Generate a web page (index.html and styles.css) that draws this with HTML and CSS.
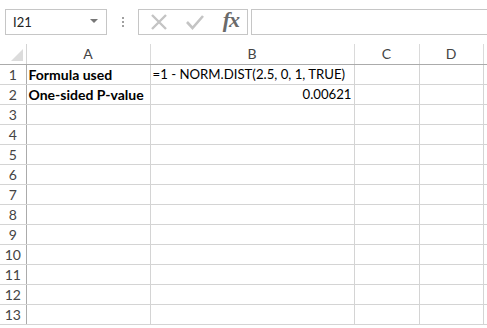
FILE: index.html
```html
<!DOCTYPE html>
<html lang="en">
<head>
  <meta charset="UTF-8" />
  <title>Sheet1</title>
  <link rel="stylesheet" href="styles.css">
</head>
<body>
  <div class="toolbar">
    <div class="namebox">
      <span class="cellref">I21</span>
      <span class="caret"></span>
    </div>
    <div class="grip"><i></i><i></i><i></i></div>
    <div class="fbuttons">
      <svg class="ico" width="18" height="18" viewBox="0 0 18 18"><path d="M2 2 L16 16 M16 2 L2 16" stroke="#c4c4c4" stroke-width="2.4" fill="none"/></svg>
      <svg class="ico" width="18" height="18" viewBox="0 0 18 18"><path d="M1 9 L6.5 15 L17 3" stroke="#c4c4c4" stroke-width="2.6" fill="none"/></svg>
      <span class="fx">fx</span>
    </div>
    <div class="fbar"></div>
  </div>

  <table class="sheet">
    <colgroup>
      <col class="c-hd"><col class="c-a"><col class="c-b"><col class="c-c"><col class="c-d"><col class="c-e">
    </colgroup>
    <tr class="colhead">
      <th class="corner"><span class="tri"></span></th><th>A</th><th>B</th><th>C</th><th>D</th><th class="last"></th>
    </tr>
    <tr><th>1</th><td class="bold">Formula used</td><td>=1 - NORM.DIST(2.5, 0, 1, TRUE)</td><td></td><td></td><td></td></tr>
    <tr><th>2</th><td class="bold">One-sided P-value</td><td class="num">0.00621</td><td></td><td></td><td></td></tr>
    <tr><th>3</th><td></td><td></td><td></td><td></td><td></td></tr>
    <tr><th>4</th><td></td><td></td><td></td><td></td><td></td></tr>
    <tr><th>5</th><td></td><td></td><td></td><td></td><td></td></tr>
    <tr><th>6</th><td></td><td></td><td></td><td></td><td></td></tr>
    <tr><th>7</th><td></td><td></td><td></td><td></td><td></td></tr>
    <tr><th>8</th><td></td><td></td><td></td><td></td><td></td></tr>
    <tr><th>9</th><td></td><td></td><td></td><td></td><td></td></tr>
    <tr><th>10</th><td></td><td></td><td></td><td></td><td></td></tr>
    <tr><th>11</th><td></td><td></td><td></td><td></td><td></td></tr>
    <tr><th>12</th><td></td><td></td><td></td><td></td><td></td></tr>
    <tr><th>13</th><td></td><td></td><td></td><td></td><td></td></tr>
  </table>
</body>
</html>
```

FILE: styles.css
```css
:root {
  --grid: #d4d4d4;
  --head-line: #ababab;
  --head-text: #444;
  --box: #c6c6c6;
}
* { box-sizing: border-box; margin:0; padding:0; }
html, body { height:100%; overflow:hidden; }
body { background:#fff; font-family:'Lato', 'Liberation Sans', sans-serif; color:#000; }

.toolbar { display:flex; align-items:center; height:44px; padding:9px 0 9px 5px; }
.namebox {
  width:102px; height:26px; border:1px solid var(--box);
  display:flex; align-items:center; justify-content:space-between;
  padding:0 8px 0 7px; font-size:13px; color:#222;
}
.caret { width:0; height:0; border-left:4px solid transparent; border-right:4px solid transparent; border-top:4px solid #777; margin-top:-2px; }
.grip { width:31px; display:flex; flex-direction:column; align-items:center; gap:2px; }
.grip i { width:2px; height:2px; background:#a0a0a0; }
.fbuttons {
  width:110px; height:26px; border:1px solid var(--box);
  display:flex; align-items:center; justify-content:space-between; padding:0 8px 0 11px;
}
.fx { font-family:'Liberation Serif', 'DejaVu Serif', serif; font-style:italic; font-weight:700; font-size:22px; color:#6a6a6a; margin-top:-4px; letter-spacing:-1px; }
.fbar { flex:1; height:26px; border:1px solid var(--box); border-right:none; margin-left:3px; }

.sheet { border-collapse:collapse; table-layout:fixed; width:500px; font-size:13.2px; }
.c-hd { width:26px; }
.c-a { width:124px; }
.c-b { width:204px; }
.c-c { width:65px; }
.c-d { width:64px; }
.c-e { width:17px; }
.sheet tr { height:20px; }
.sheet th {
  font-weight:400; color:var(--head-text); font-size:14px;
  border-right:1px solid var(--head-line); border-bottom:1px solid var(--grid);
  text-align:center; padding:0;
}
.colhead { height:20px; }
.colhead th { border-right:1px solid #dadada; border-bottom:1px solid var(--head-line); }
.colhead th.corner { border-right:1px solid var(--grid); position:relative; }
.tri { position:absolute; right:3px; bottom:3px; width:0; height:0; border-left:12px solid transparent; border-bottom:12px solid #dcdcdc; }
.sheet td { border-right:1px solid var(--grid); border-bottom:1px solid var(--grid); padding:0 2px; white-space:nowrap; overflow:visible; }
.sheet td.bold { font-weight:700; font-size:14px; }
.sheet td.num { text-align:right; padding-right:2px; }
.sheet .last { border-right:none; }
```
